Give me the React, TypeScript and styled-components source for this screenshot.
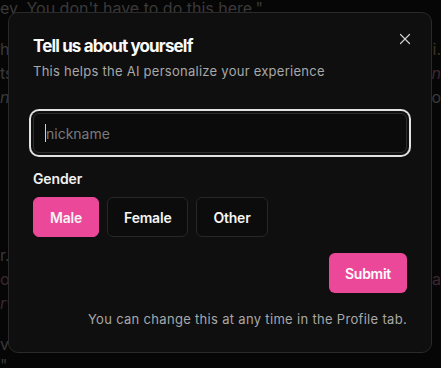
import React from "react";
import styled, { createGlobalStyle } from "styled-components";
import { X } from "lucide-react";

const Global = createGlobalStyle`
  html, body { margin: 0; padding: 0; background: #060606; }
  body { font-family: Inter, "Noto Sans", sans-serif; overflow: hidden; }
  * { box-sizing: border-box; }
`;

const Backdrop = styled.div`
  width: 441px;
  height: 368px;
  overflow: hidden;
  display: flex;
  flex-direction: column;
  font-size: 16px;
  line-height: 24px;
  color: #3a3a3a;
`;

const BgLine = styled.div<{ $gap?: number }>`
  display: flex;
  justify-content: space-between;
  white-space: nowrap;
  height: 24px;
  margin-top: ${(p) => p.$gap ?? 0}px;
`;

const Frag = styled.span<{ $tone?: "red" | "gold" | "gray"; $italic?: boolean }>`
  color: ${(p) => (p.$tone === "red" ? "#3f2630" : p.$tone === "gold" ? "#3d3420" : "#3a3a3a")};
  font-style: ${(p) => (p.$italic ? "italic" : "normal")};
`;

const Modal = styled.div`
  position: fixed;
  left: 8px;
  top: 12px;
  width: 424px;
  height: 341px;
  background: #0f0f0f;
  border: 1px solid #2a2a2a;
  border-radius: 10px;
  padding: 21px 24px 24px;
  display: flex;
  flex-direction: column;
  color: #fafafa;
`;

const CloseButton = styled.button`
  position: absolute;
  top: 16px;
  right: 16px;
  width: 20px;
  height: 20px;
  padding: 0;
  border: none;
  background: transparent;
  color: #d0d0d0;
  display: flex;
  align-items: center;
  justify-content: center;
`;

const Title = styled.h2`
  margin: 0;
  font-size: 17px;
  line-height: 24px;
  font-weight: 700;
  letter-spacing: -0.05em;
  color: #fafafa;
`;

const Subtitle = styled.p`
  margin: 3px 0 0;
  font-size: 13px;
  line-height: 20px;
  letter-spacing: 0.02em;
  color: #a8a8a8;
`;

const InputWrap = styled.div`
  position: relative;
  margin-top: 32px;
`;

const Input = styled.input`
  width: 100%;
  height: 40px;
  padding: 0 12px;
  border: 1px solid #2c2c2c;
  border-radius: 6px;
  background: #0b0b0b;
  color: #fafafa;
  font-family: Inter, sans-serif;
  font-size: 14px;
  outline: none;
  box-shadow: 0 0 0 2px #0f0f0f, 0 0 0 4px #e2e2e2;
  &::placeholder { color: #7a7a7a; }
`;

const Caret = styled.span`
  position: absolute;
  left: 12px;
  top: 11px;
  width: 1px;
  height: 18px;
  background: #d0d0d0;
`;

const Label = styled.div`
  margin-top: 16px;
  font-size: 14px;
  line-height: 20px;
  font-weight: 600;
  letter-spacing: -0.01em;
  color: #f2f2f2;
`;

const Options = styled.div`
  display: flex;
  gap: 8px;
  margin-top: 8px;
`;

const Option = styled.button<{ $active?: boolean }>`
  height: 40px;
  padding: 0 16px;
  border-radius: 6px;
  border: 1px solid ${(p) => (p.$active ? "#ec4899" : "#272727")};
  background: ${(p) => (p.$active ? "#ec4899" : "#0c0c0c")};
  color: #f5f5f5;
  font-family: Inter, sans-serif;
  font-size: 14px;
  font-weight: 600;
  letter-spacing: -0.015em;
`;

const Actions = styled.div`
  display: flex;
  justify-content: flex-end;
  margin-top: 16px;
`;

const Submit = styled.button`
  height: 40px;
  padding: 0 16px;
  border: none;
  border-radius: 6px;
  background: #ec4899;
  color: #fff;
  font-family: Inter, sans-serif;
  font-size: 14px;
  font-weight: 600;
  letter-spacing: -0.02em;
`;

const Note = styled.p`
  margin: 16px 0 0;
  text-align: right;
  font-size: 13px;
  line-height: 20px;
  letter-spacing: 0.024em;
  color: #a8a8a8;
`;

export default function App() {
  return (
    <>
      <Global />
      <Backdrop>
        <BgLine $gap={-4}>
          <Frag>ey. You don't have to do this here."</Frag>
        </BgLine>
        <BgLine $gap={17}>
          <Frag>he</Frag>
          <Frag $tone="gold">i.</Frag>
        </BgLine>
        <BgLine>
          <Frag>ts</Frag>
          <Frag $tone="red" $italic>n</Frag>
        </BgLine>
        <BgLine>
          <Frag $italic>n</Frag>
          <Frag>o</Frag>
        </BgLine>
        <BgLine $gap={134}>
          <Frag>r.</Frag>
        </BgLine>
        <BgLine>
          <Frag $tone="red">oi</Frag>
          <Frag $tone="red">a</Frag>
        </BgLine>
        <BgLine>
          <Frag $tone="red" $italic>rv</Frag>
        </BgLine>
        <BgLine $gap={17}>
          <Frag>ve</Frag>
        </BgLine>
        <BgLine $gap={-3}>
          <Frag>"</Frag>
        </BgLine>
      </Backdrop>
      <Modal>
        <CloseButton aria-label="Close">
          <X size={18} strokeWidth={1.6} />
        </CloseButton>
        <Title>Tell us about yourself</Title>
        <Subtitle>This helps the AI personalize your experience</Subtitle>
        <InputWrap>
          <Input placeholder="nickname" />
          <Caret />
        </InputWrap>
        <Label>Gender</Label>
        <Options>
          <Option $active>Male</Option>
          <Option>Female</Option>
          <Option>Other</Option>
        </Options>
        <Actions>
          <Submit>Submit</Submit>
        </Actions>
        <Note>You can change this at any time in the Profile tab.</Note>
      </Modal>
    </>
  );
}
